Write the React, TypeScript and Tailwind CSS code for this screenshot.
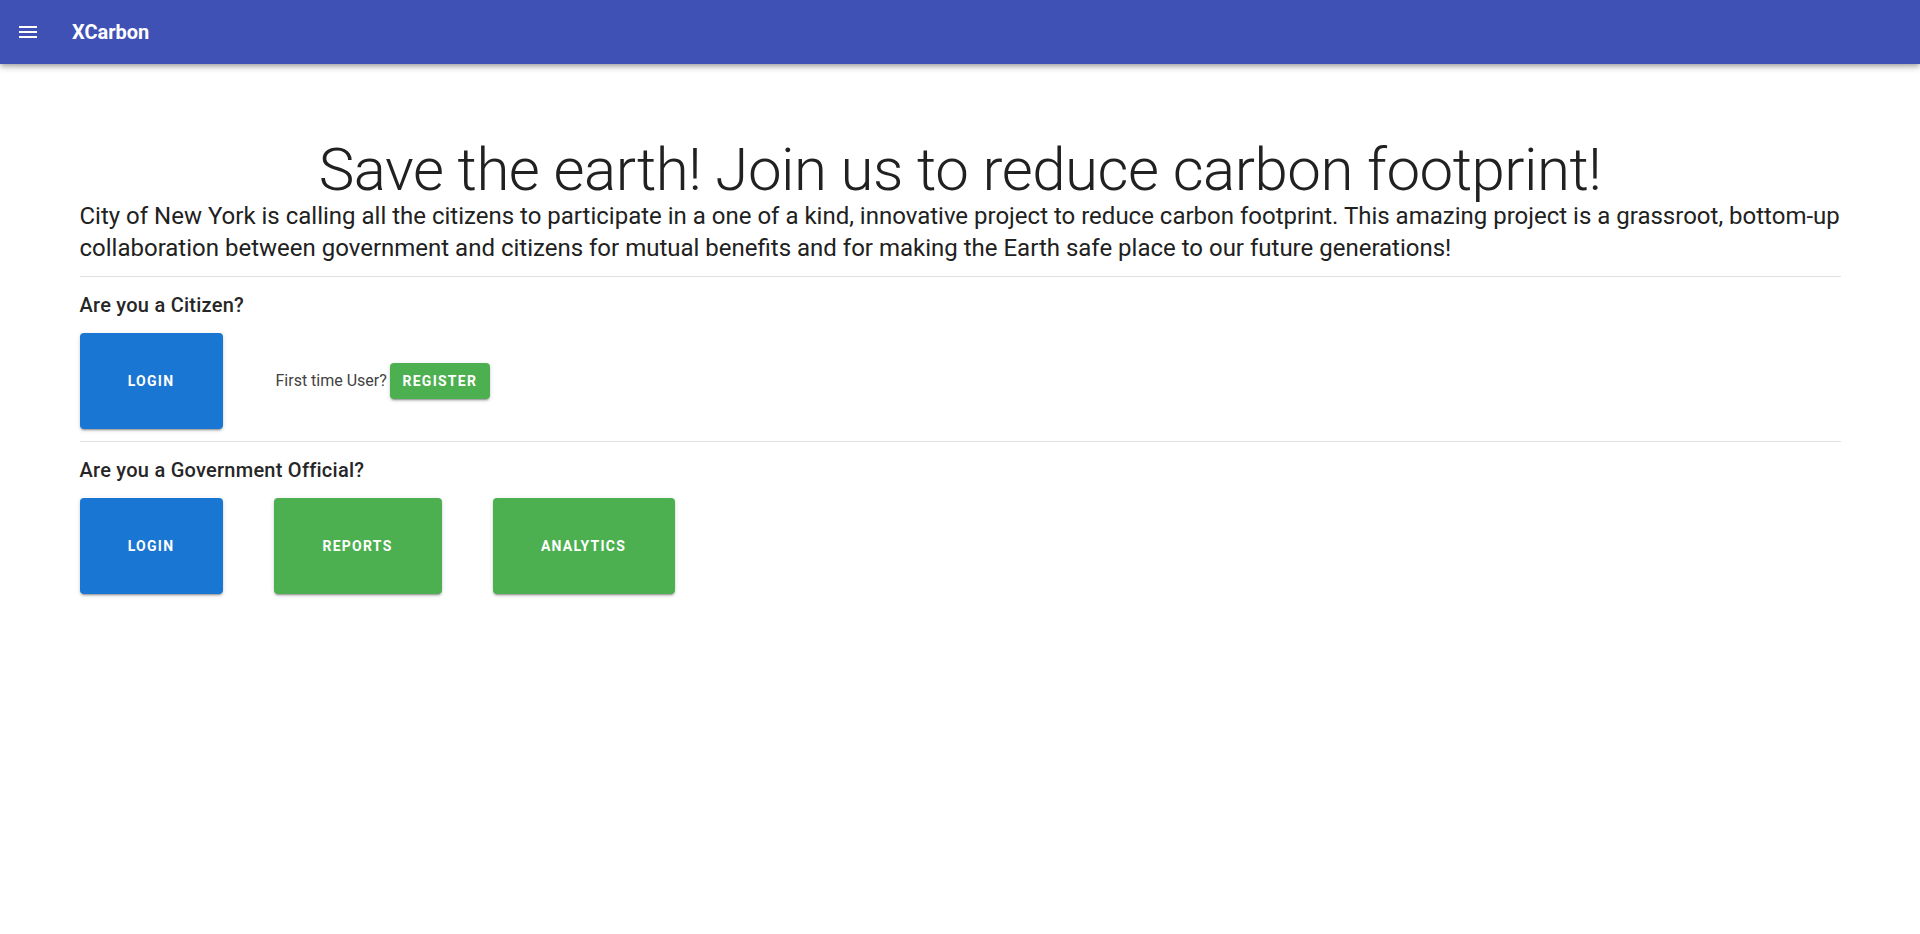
import React from 'react';

const MenuIcon = () => (
  <svg className="w-6 h-6" viewBox="0 0 24 24" fill="currentColor">
    <path d="M3,6H21V8H3V6M3,11H21V13H3V11M3,16H21V18H3V16Z" />
  </svg>
);

const btnBase =
  'inline-flex items-center justify-center rounded-[4px] text-white text-[14px] font-bold uppercase tracking-[0.0892857em] shadow-[0_3px_1px_-2px_rgba(0,0,0,0.2),0_2px_2px_0_rgba(0,0,0,0.14),0_1px_5px_0_rgba(0,0,0,0.12)]';

const App: React.FC = () => {
  return (
    <div className="min-h-screen bg-white text-[#212121] font-['Roboto',sans-serif]">
      {/* App bar */}
      <header className="h-16 bg-[#3f51b5] text-white flex items-center px-4 shadow-[0_2px_4px_-1px_rgba(0,0,0,0.2),0_4px_5px_0_rgba(0,0,0,0.14),0_1px_10px_0_rgba(0,0,0,0.12)] relative z-10">
        <button className="w-12 h-12 -ml-3 flex items-center justify-center">
          <MenuIcon />
        </button>
        <div className="pl-5 text-[20px] font-bold leading-none">XCarbon</div>
      </header>

      <main className="max-w-[1785px] mx-auto px-3 pt-[76px]">
        <h1 className="text-center text-[60px] font-light leading-[60px] tracking-[-0.0083em]">
          Save the earth! Join us to reduce carbon footprint!
        </h1>
        <p className="text-[24px] leading-8">
          City of New York is calling all the citizens to participate in a one of a kind, innovative project to reduce carbon footprint. This amazing project is a grassroot, bottom-up collaboration between government and citizens for mutual benefits and for making the Earth safe place to our future generations!
        </p>

        <hr className="mt-3 border-t border-[rgba(0,0,0,0.12)]" />

        <h2 className="mt-3 text-[20px] font-medium leading-8 tracking-[0.0125em] text-[#262626]">Are you a Citizen?</h2>
        <div className="mt-3 flex items-center gap-[53px]">
          <button className={`${btnBase} bg-[#1976d2] w-[143px] h-24`}>Login</button>
          <div className="flex items-center gap-[3px]">
            <span className="text-[16px] text-[#424242]">First time User?</span>
            <button className={`${btnBase} bg-[#4caf50] w-[100px] h-9`}>Register</button>
          </div>
        </div>

        <hr className="mt-3 border-t border-[rgba(0,0,0,0.12)]" />

        <h2 className="mt-3 text-[20px] font-medium leading-8 tracking-[0.0125em] text-[#262626]">Are you a Government Official?</h2>
        <div className="mt-3 flex items-center gap-[51px]">
          <button className={`${btnBase} bg-[#1976d2] w-[143px] h-24`}>Login</button>
          <button className={`${btnBase} bg-[#4caf50] w-[168px] h-24`}>Reports</button>
          <button className={`${btnBase} bg-[#4caf50] w-[182px] h-24`}>Analytics</button>
        </div>
      </main>
    </div>
  );
};

export default App;
